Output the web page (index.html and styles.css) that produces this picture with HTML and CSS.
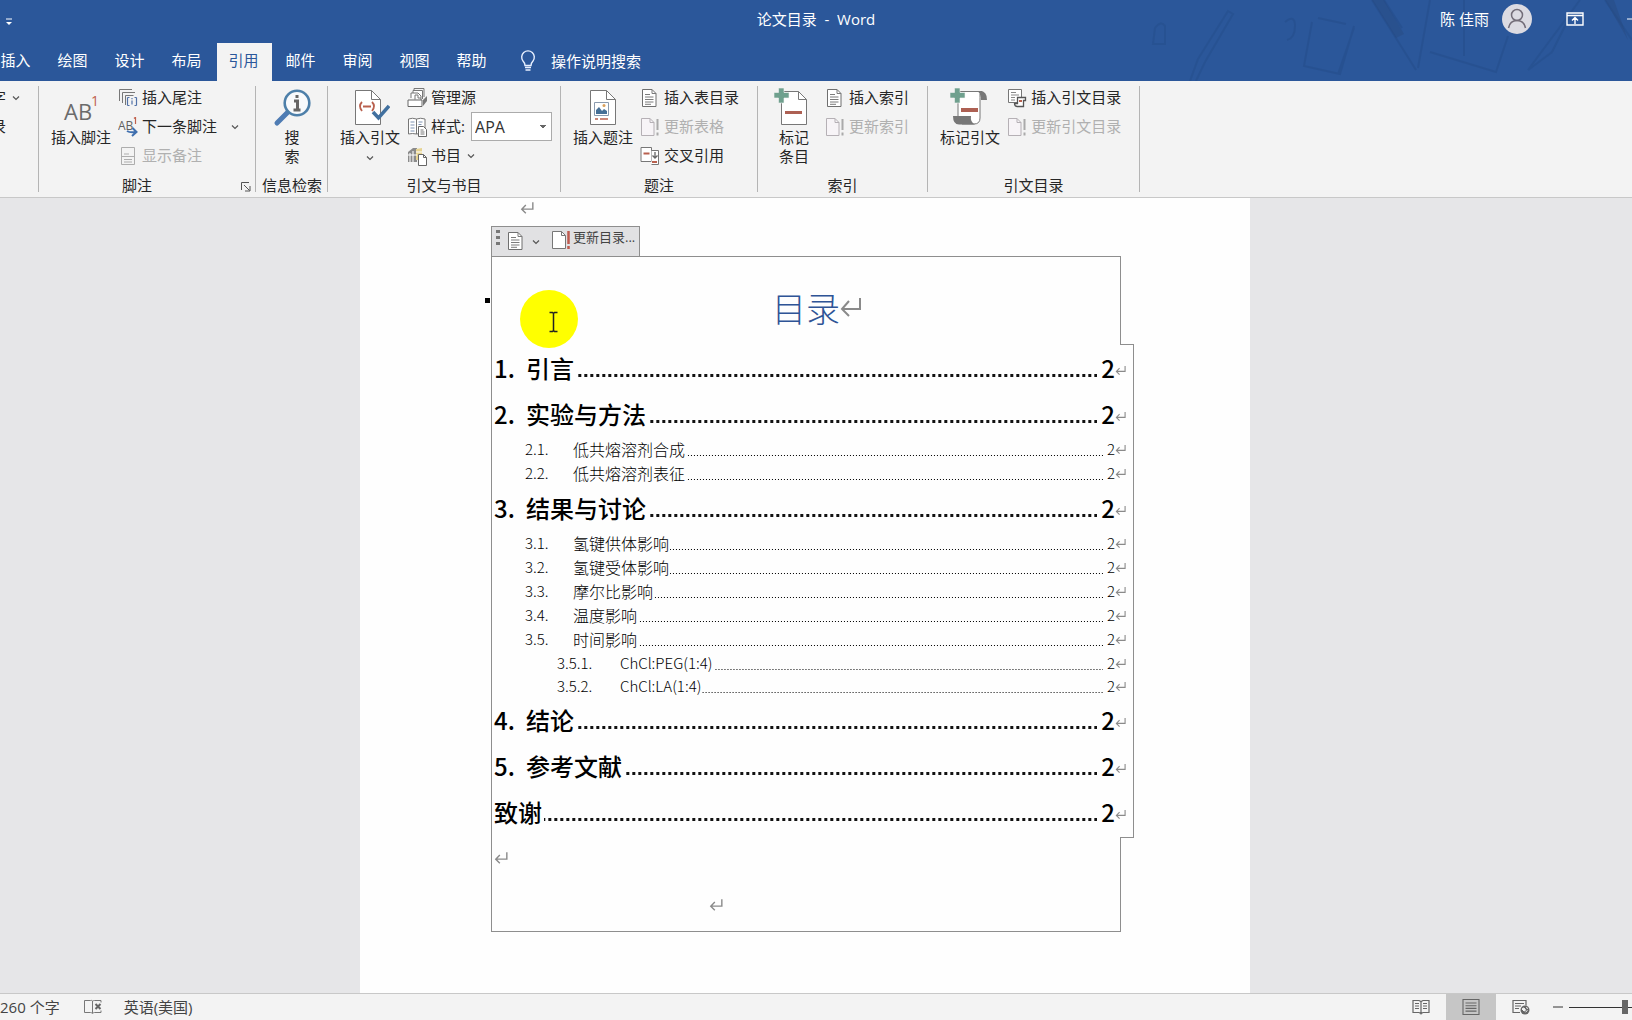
FILE: index.html
```html
<!DOCTYPE html>
<html lang="zh-CN">
<head>
<meta charset="utf-8">
<title>论文目录 - Word</title>
<link rel="stylesheet" href="styles.css">
</head>
<body>
<svg class="defs" aria-hidden="true">
  <symbol id="ret" viewBox="0 0 12 12"><path d="M11 1v6H1.500M5 3.500L1.500 7L5 10.500" fill="none" stroke="#8a8a8a" stroke-width="1.200"/></symbol>
  <symbol id="chev" viewBox="0 0 8 8"><path d="M1 2.500l3 3 3-3" fill="none" stroke="#555" stroke-width="1.200"/></symbol>
  <symbol id="list-doc" viewBox="0 0 20 20"><path d="M2.500 1.500h9.500l4 4v13h-13.500z" fill="#fff" stroke="#6f6f6f"/><path d="M12 1.500v4h4M5 6.500h5M5 9h8.500M5 11.500h8.500M5 14h8.500M5 16.300h6" fill="none" stroke="#7b7b7b"/></symbol>
  <symbol id="update-off" viewBox="0 0 20 20"><path d="M1.500 1.500h8.500l4 4v13h-12.500z" fill="#f7f4f7" stroke="#b5b0b5"/><path d="M10 1.500v4h4" fill="none" stroke="#b5b0b5"/><path d="M17.500 2v11M17.500 15.500v3" stroke="#aaa" stroke-width="2"/></symbol>
</svg>

<header class="top">
  <svg class="art" viewBox="0 0 532 81" aria-hidden="true">
    <g fill="none" stroke="#234a86" stroke-width="2" opacity=".4">
      <path d="M90 81l8-22 30-48 5 3-28 48-9 19M55 28q6-8 10-2v18h-12z"/>
      <path d="M185 22q10-8 10 4t-8 14M212 22l-8 44 36 8 14-48M218 18l28 6M254 28l-16 46"/>
      <path d="M272 0l44 70M284 0l18 28M330 0l-12 68M330 52l66 20 12-36M364 0v56M480 0l-52 70 24-18 18-36M505 0l27 40"/>
    </g>
    <path d="M272 0h12l20 34-8 4zM505 0h9l14 40z" fill="#27497d" opacity=".4"/>
  </svg>
  <div class="title-bar">
    <button class="qat" aria-label="自定义快速访问工具栏"><svg width="8" height="8" viewBox="0 0 8 8"><path d="M1 1h6" stroke="#fff"/><path d="M1 4h6L4 7z" fill="#fff"/></svg></button>
    <h1>论文目录&nbsp; -&nbsp; Word</h1>
    <div class="account">
      <span>陈 佳雨</span>
      <svg class="avatar" width="30" height="30" viewBox="0 0 30 30"><circle cx="15" cy="15" r="15" fill="#dcdbe2"/><circle cx="15" cy="11" r="5.500" fill="none" stroke="#736d78" stroke-width="1.500"/><path d="M6.500 24q1.500-7.500 8.500-7.500t8.500 7.500" fill="none" stroke="#736d78" stroke-width="1.500"/></svg>
      <button class="display" aria-label="功能区显示选项"><svg width="18" height="14" viewBox="0 0 18 14"><path d="M1 1h16v12H1zM1 3.500h16M9 12V6M6 8.500l3-3 3 3" fill="none" stroke="#fff" stroke-width="1.400"/></svg></button>
      <button class="min" aria-label="最小化"><svg width="5" height="2"><path d="M0 1h5" stroke="#fff"/></svg></button>
    </div>
  </div>
  <nav class="tabs">
    <button>插入</button><button>绘图</button><button>设计</button><button>布局</button><button class="active">引用</button><button>邮件</button><button>审阅</button><button>视图</button><button>帮助</button>
    <button class="tell"><svg width="16" height="22" viewBox="0 0 16 22"><path d="M5 15.500q0-2.500-2-4.500A6.300 6.300 0 1 1 13 11q-2 2-2 4.500zM5 17.500h6M5.500 20h5" fill="none" stroke="#e8f0ff" stroke-width="1.400"/></svg>操作说明搜索</button>
  </nav>
</header>

<section class="ribbon">
  <div class="group cut">
    <div class="body"><div class="stack">
      <button>添加文字<svg class="chev"><use href="#chev"/></svg></button>
      <button>更新目录</button>
    </div></div>
  </div>
  <i class="sep"></i>
  <div class="group notes">
    <div class="body">
      <button class="big"><svg viewBox="0 0 40 40"><text x="3" y="32" class="glyph-ab">AB</text><text x="30" y="18" class="glyph-one">1</text></svg>插入脚注</button>
      <div class="stack">
        <button><svg viewBox="0 0 20 20"><path d="M1.500 13V1.500H14M4.500 15V4.500H17M7.500 17V7.500h8" fill="none" stroke="#777"/><path d="M9.500 9.500v8M9.500 9.500h2M9.500 17.500h2M18.500 9.500v8M18.500 9.500h-2M18.500 17.500h-2M14 12.500v4M14 10v1.300" fill="none" stroke="#5272a8" stroke-width="1.200"/></svg>插入尾注</button>
        <button><svg viewBox="0 0 20 20"><text x="0" y="13" class="glyph-sm">AB</text><path d="M17.500 0v7M16 1.500l1.500-1.300" stroke="#c0604c" stroke-width="1.200" fill="none"/><path d="M9 14q3 2 9 1M14.500 11l4 4-4.500 4" fill="none" stroke="#3f6fae" stroke-width="2"/></svg>下一条脚注<svg class="chev far"><use href="#chev"/></svg></button>
        <button disabled><svg viewBox="0 0 20 20"><path d="M3.500 1.500h13v17h-13zM3.500 10.500h13M6 8h5M6 13.500h8M6 16h8" fill="none" stroke="#adadad"/></svg>显示备注</button>
      </div>
    </div>
    <div class="label">脚注<button class="launch" aria-label="脚注和尾注"><svg width="10" height="10" viewBox="0 0 10 10"><path d="M.5 8V.5H8M3 3l5.500 5.500M9 4v5H4" fill="none" stroke="#555"/></svg></button></div>
  </div>
  <i class="sep"></i>
  <div class="group lookup">
    <div class="body">
      <button class="big"><svg viewBox="0 0 40 40"><path d="M16 24L5 35" stroke="#4f7cb3" stroke-width="5" stroke-linecap="round"/><circle cx="25" cy="15" r="12.300" fill="#f8fafc" stroke="#4d7fa9" stroke-width="2.600"/><path d="M25 7v3M22 13h3.500v8M21.500 22h7" fill="none" stroke="#666" stroke-width="3"/></svg>搜<br>索</button>
    </div>
    <div class="label">信息检索</div>
  </div>
  <i class="sep"></i>
  <div class="group cite">
    <div class="body">
      <button class="big"><svg viewBox="0 0 40 40"><path d="M5.500 2.500h16l9 9v25h-25z" fill="#fff" stroke="#777"/><path d="M21.500 2.500v9h9" fill="none" stroke="#777"/><path d="M12 14q-4 4 0 9M22 14q4 4 0 9M13 18.500h8" fill="none" stroke="#b9604e" stroke-width="1.800"/><path d="M23 24l5.500 6L39 18" fill="none" stroke="#41709f" stroke-width="3.500"/></svg>插入引文<svg class="chev"><use href="#chev"/></svg></button>
      <div class="stack">
        <button><svg viewBox="0 0 20 20"><path d="M4 10V5h2V2.500h9.500V11M6 5h5l3 3v4" fill="#fff" stroke="#777"/><path d="M7 2.500V.5h10V9M8 11.500V7h3v3h3" fill="none" stroke="#777"/><path d="M1 12h14v6.500H1z" fill="#fff" stroke="#666"/><path d="M16 12l4-4v5l-4 5z" fill="#777"/></svg>管理源</button>
        <div class="field"><svg viewBox="0 0 20 20"><path d="M1.500 2q4-1.500 8 0 4-1.500 8.500 0v15q-4-1-8.500 0-4-1-8 0zM9.500 2v15" fill="#fff" stroke="#777"/><path d="M3.500 5h4M3.500 8h4M3.500 11h4M3.500 14h4M11.500 5h4M11.500 7.500h3" stroke="#7e93b3"/><path d="M11.500 9.500h5l3 3v7h-8z" fill="#fff" stroke="#666"/><path d="M13.500 13h3M13.500 15h4M13.500 17h4" stroke="#777"/></svg><label for="style">样式:</label><select id="style"><option>APA</option></select></div>
        <button><svg viewBox="0 0 20 20"><path d="M1 6l5-4h4v14H1z" fill="#8b8b8b"/><path d="M3 7v9M6 5v11" stroke="#ddd" stroke-width="1.500"/><path d="M9 3l6-1v12H9z" fill="#e6d391"/><path d="M1 9h9M9 6h6" stroke="#fff"/><path d="M11.500 8.500h5l3 3v8h-8z" fill="#fff" stroke="#666"/><path d="M16.500 8.500v3h3" fill="none" stroke="#666"/></svg>书目<svg class="chev"><use href="#chev"/></svg></button>
      </div>
    </div>
    <div class="label">引文与书目</div>
  </div>
  <i class="sep"></i>
  <div class="group">
    <div class="body">
      <button class="big"><svg viewBox="0 0 40 40"><path d="M7.500 2.500h16l9 9v25h-25z" fill="#fff" stroke="#777"/><path d="M23.500 2.500v9h9" fill="none" stroke="#777"/><path d="M11.500 14.500h14v13h-14z" fill="#fff" stroke="#8a9aae"/><path d="M13 26v-4l3-3 3 4 2-2 3 2v3z" fill="#456f96"/><circle cx="21" cy="17.500" r="1.500" fill="#d9a05c"/><path d="M12 31h3M17 31h8" stroke="#b9604e" stroke-width="1.500"/></svg>插入题注</button>
      <div class="stack">
        <button><svg><use href="#list-doc"/></svg>插入表目录</button>
        <button disabled><svg><use href="#update-off"/></svg>更新表格</button>
        <button><svg viewBox="0 0 20 20"><path d="M1 1.500h10.500v14H1z" fill="#fff" stroke="#777"/><path d="M3.500 7.500h6" stroke="#b9604e" stroke-width="2"/><path d="M11.500 4.500h7v14h-7" fill="#fff" stroke="#777"/><path d="M15 6v6M12.500 9.500L15 12l2.500-2.500" fill="none" stroke="#666" stroke-width="1.300"/><path d="M12 16h5" stroke="#b9604e" stroke-width="2"/></svg>交叉引用</button>
      </div>
    </div>
    <div class="label">题注</div>
  </div>
  <i class="sep"></i>
  <div class="group">
    <div class="body">
      <button class="big narrow"><svg viewBox="0 0 40 40"><path d="M7.500 3.500h17l8 8v25h-25z" fill="#fff" stroke="#777"/><path d="M24.500 3.500v8h8" fill="none" stroke="#777"/><path d="M0 4.500h4.500V0H10v4.500h5V10h-5v5H4.500v-5H0z" fill="#6fa08e" stroke="#f3f3f3" stroke-width=".6"/><path d="M11 24.500h17" stroke="#ad6053" stroke-width="3"/></svg>标记<br>条目</button>
      <div class="stack">
        <button><svg><use href="#list-doc"/></svg>插入索引</button>
        <button disabled><svg><use href="#update-off"/></svg>更新索引</button>
      </div>
    </div>
    <div class="label">索引</div>
  </div>
  <i class="sep"></i>
  <div class="group">
    <div class="body">
      <button class="big"><svg viewBox="0 0 40 40"><path d="M8 28V3.500h24q-3 2-2 6V30q0 6-6 6H12z" fill="#fff" stroke="#777"/><path d="M30 3q7 0 7 9h-6q0-6-3-8.500z" fill="#777"/><path d="M3 28h18q-1 6 4 8.500H9q-6 0-6-8.500z" fill="#777"/><path d="M0 4.500h4.500V0H10v4.500h5V10h-5v5H4.500v-5H0z" fill="#6fa08e" stroke="#f3f3f3" stroke-width=".6"/><path d="M11 22h17" stroke="#ad6053" stroke-width="4"/></svg>标记引文</button>
      <div class="stack">
        <button><svg viewBox="0 0 20 20"><path d="M1.500 1.500h13v13H1.500z" fill="#fff" stroke="#777"/><path d="M4 4.500h5M4 7h8M4 9.500h4M4 12h4" stroke="#888"/><path d="M10.500 9.500h8v3h-2v6h-6q-3 0-3-3h3z" fill="#fff" stroke="#555" stroke-width="1.300"/><path d="M12 13h3" stroke="#b9604e" stroke-width="2"/></svg>插入引文目录</button>
        <button disabled><svg><use href="#update-off"/></svg>更新引文目录</button>
      </div>
    </div>
    <div class="label">引文目录</div>
  </div>
  <i class="sep"></i>
</section>

<main class="desk">
  <article class="page">
    <p class="lead"><svg class="ret"><use href="#ret"/></svg></p>
    <div class="toc-bar">
      <svg width="4" height="16" viewBox="0 0 4 16"><path d="M0 0h4v3H0zM0 6h4v3H0zM0 12h4v3H0z" fill="#777"/></svg>
      <button class="pick" aria-label="目录"><svg width="20" height="20"><use href="#list-doc"/></svg><svg class="chev"><use href="#chev"/></svg></button>
      <button class="upd"><svg width="20" height="20" viewBox="0 0 20 20"><path d="M1.500 1.500h9l4 4v13h-13z" fill="#fff" stroke="#777"/><path d="M10.500 1.500v4h4" fill="none" stroke="#777"/><path d="M17.500 1v13M17.500 16v3" stroke="#bf5b50" stroke-width="2.500"/></svg>更新目录...</button>
    </div>
    <div class="toc">
      <div class="toc-head"><i class="mark"></i><h2>目录<svg width="22" height="24" viewBox="0 0 22 24"><path d="M20 3v11H2M9 6l-7 8 7 7" fill="none" stroke="#8a8a8a" stroke-width="2"/></svg></h2></div>
      <nav class="toc-list">
        <a href="#s1" class="l1"><span class="num">1.</span><span>引言</span><i></i><b>2</b><svg><use href="#ret"/></svg></a>
        <a href="#s2" class="l1"><span class="num">2.</span><span>实验与方法</span><i></i><b>2</b><svg><use href="#ret"/></svg></a>
        <a href="#s21" class="l2"><span class="num">2.1.</span><span>低共熔溶剂合成</span><i></i><b>2</b><svg><use href="#ret"/></svg></a>
        <a href="#s22" class="l2"><span class="num">2.2.</span><span>低共熔溶剂表征</span><i></i><b>2</b><svg><use href="#ret"/></svg></a>
        <a href="#s3" class="l1"><span class="num">3.</span><span>结果与讨论</span><i></i><b>2</b><svg><use href="#ret"/></svg></a>
        <a href="#s31" class="l2"><span class="num">3.1.</span><span>氢键供体影响</span><i></i><b>2</b><svg><use href="#ret"/></svg></a>
        <a href="#s32" class="l2"><span class="num">3.2.</span><span>氢键受体影响</span><i></i><b>2</b><svg><use href="#ret"/></svg></a>
        <a href="#s33" class="l2"><span class="num">3.3.</span><span>摩尔比影响</span><i></i><b>2</b><svg><use href="#ret"/></svg></a>
        <a href="#s34" class="l2"><span class="num">3.4.</span><span>温度影响</span><i></i><b>2</b><svg><use href="#ret"/></svg></a>
        <a href="#s35" class="l2"><span class="num">3.5.</span><span>时间影响</span><i></i><b>2</b><svg><use href="#ret"/></svg></a>
        <a href="#s351" class="l3"><span class="num">3.5.1.</span><span>ChCl:PEG(1:4)</span><i></i><b>2</b><svg><use href="#ret"/></svg></a>
        <a href="#s352" class="l3"><span class="num">3.5.2.</span><span>ChCl:LA(1:4)</span><i></i><b>2</b><svg><use href="#ret"/></svg></a>
        <a href="#s4" class="l1"><span class="num">4.</span><span>结论</span><i></i><b>2</b><svg><use href="#ret"/></svg></a>
        <a href="#s5" class="l1"><span class="num">5.</span><span>参考文献</span><i></i><b>2</b><svg><use href="#ret"/></svg></a>
        <a href="#s6" class="l1"><span>致谢</span><i></i><b>2</b><svg><use href="#ret"/></svg></a>
      </nav>
      <div class="toc-foot">
        <p><svg class="ret"><use href="#ret"/></svg></p>
        <p class="indent"><svg class="ret"><use href="#ret"/></svg></p>
      </div>
    </div>
    <svg class="pointer" width="60" height="60" viewBox="0 0 60 60"><circle cx="30" cy="30" r="29" fill="#ff0"/><path d="M30.500 23.500h3l1 1 1-1h3M34.500 24v18M30.500 42.500h3l1-1 1 1h3" fill="none" stroke="#222" stroke-width="1.500"/></svg>
  </article>
</main>

<footer class="status">
  <span class="words">260 个字</span>
  <button class="proof" aria-label="校对"><svg width="18" height="16" viewBox="0 0 18 16"><path d="M8.500 2v12M8.500 2q-1-1-2-.5h-6v12h6q1 0 2 1 1-1 2-1h6.500v-2M8.500 2q1-.5 2-.5h6.500v2" fill="none" stroke="#777"/><path d="M11.500 5l5 5M16.500 5l-5 5" stroke="#666" stroke-width="2"/></svg></button>
  <span class="lang">英语(美国)</span>
  <div class="views">
    <button aria-label="阅读视图"><svg width="18" height="16" viewBox="0 0 18 16"><path d="M9 2v13.500M1 1.500h6l2 1 2-1h6v12h-6l-2 1-2-1H1zM3 4.500h4M3 7h4M3 9.500h4M11 4.500h4M11 7h4M11 9.500h4" fill="none" stroke="#666" stroke-width="1.200"/></svg></button>
    <button class="on" aria-label="页面视图"><svg width="18" height="16" viewBox="0 0 18 16"><path d="M1 .5h16v15H1zM3.500 4h11M3.500 6.700h11M3.500 9.400h11M3.500 12.100h11" fill="none" stroke="#666" stroke-width="1.100"/></svg></button>
    <button aria-label="Web 版式视图"><svg width="18" height="16" viewBox="0 0 18 16"><path d="M8 13.500H1v-12h13v5M3 4.500h9M3 7h6M3 9.500h4" fill="none" stroke="#666" stroke-width="1.200"/><circle cx="13" cy="11" r="4.500" fill="#666"/><path d="M10 10q2-2 3 0t-1 2zM14 8.500l2 1M13.500 13l2-1.500" fill="#f3f3f3" stroke="#f3f3f3"/></svg></button>
    <button class="out" aria-label="缩小"><svg width="10" height="2"><path d="M0 1h10" stroke="#333"/></svg></button>
    <div class="zoom"><input type="range" min="0" max="100" value="50" aria-label="显示比例"></div>
  </div>
</footer>
</body>
</html>
```
FILE: styles.css
```css
* { box-sizing: border-box; }
html, body { height: 100%; }
body {
  margin: 0;
  display: flex;
  flex-direction: column;
  overflow: hidden;
  font: 15px/19px "Open Sans", "Noto Sans CJK SC", sans-serif;
  color: #262626;
  background: #e6e6e8;
}
h1, h2, p { margin: 0; font-weight: 400; }
button {
  padding: 0;
  border: 0;
  background: none;
  font: inherit;
  color: inherit;
  white-space: nowrap;
}
svg { display: block; flex: none; }
.defs { position: absolute; width: 0; height: 0; }
.chev { width: 8px; height: 8px; }

/* Title bar and tabs */
.top { position: relative; background: #2b579a; color: #fff; }
.art { position: absolute; right: 0; top: 0; width: 532px; height: 81px; }
.title-bar {
  position: relative;
  display: grid;
  grid-template-columns: 1fr auto 1fr;
  align-items: center;
  height: 38px;
}
.title-bar h1 { font-size: 15px; line-height: 19px; }
.qat { justify-self: start; margin-left: 5px; padding-top: 6px; }
.account { display: flex; justify-content: flex-end; align-items: center; }
.avatar { margin-left: 13px; }
.display { margin-left: 34px; }
.min { margin-left: 43px; }
.tabs {
  position: relative;
  display: flex;
  gap: 2px;
  margin-left: -11px;
  padding-top: 5px;
}
.tabs button { width: 55px; height: 38px; padding: 0 2px 4px 0; }
.tabs .active { background: #f3f3f3; color: #2b579a; }
.tabs .tell { display: flex; align-items: center; gap: 15px; width: auto; margin-left: 18px; padding-bottom: 2px; }

/* Ribbon */
.ribbon {
  display: flex;
  padding: 2px 0;
  background: #f3f3f3;
  border-bottom: 1px solid #c8c8c8;
}
.sep { width: 1px; margin: 3px 0; background: #b4b4b4; }
.group { display: flex; flex-direction: column; }
.body { display: flex; gap: 7px; height: 88px; padding: 0 18px 0 12px; }
.label { display: flex; justify-content: center; margin-top: 4px; line-height: 20px; }
.big {
  display: flex;
  flex-direction: column;
  align-items: center;
  padding-top: 5px;
  line-height: 19px;
}
.big svg { width: 40px; height: 40px; }
.big .chev { width: 8px; height: 8px; margin: 7px 0 0; }
.narrow { width: 48px; }
.stack button, .field {
  display: flex;
  align-items: center;
  gap: 4px;
  height: 29px;
}
.stack svg { width: 20px; height: 20px; }
.stack .chev { width: 8px; height: 8px; margin-left: 2px; }
.stack .far { margin-left: 10px; }
.stack button:disabled { color: #b0b0b0; }
.glyph-ab { font: 22px "Open Sans", sans-serif; fill: #6b6b6b; }
.glyph-one { font: 14px "Open Sans", sans-serif; fill: #c0604c; }
.glyph-sm { font: 12px "Open Sans", sans-serif; fill: #5f5f5f; }
.cut { width: 38px; align-items: flex-end; }
.notes .body { padding-right: 16px; }
.cut .body { padding-right: 18px; }
.notes .label { position: relative; padding-right: 20px; }
.launch { position: absolute; right: 4px; top: 7px; }
.lookup { padding: 0 5px 0 6px; }
.lookup .body { justify-content: center; padding: 0; }
.cite .body { padding-right: 8px; }
.field label { width: 36px; }
.field select {
  width: 81px;
  height: 29px;
  padding: 0 3px;
  border: 1px solid #ababab;
  border-radius: 0;
  appearance: none;
  background: conic-gradient(from -45deg at 50% 100%, #666 90deg, transparent 0) no-repeat right 5px center / 6px 3px, #fff;
  font: 16px "Open Sans", sans-serif;
  color: #333;
}

/* Document */
.desk { flex: 1; min-height: 0; display: flex; justify-content: center; padding-right: 22px; overflow: hidden; }
.page { position: relative; width: 890px; padding-left: 131px; background: #fefefe; }
.ret { width: 14px; height: 14px; }
.lead { height: 28px; padding: 3px 0 0 29px; }
.toc-bar {
  display: flex;
  width: 149px;
  height: 31px;
  padding: 3px 0 0 4px;
  border: 1px solid #8e8e8e;
  background: #e1e1e3;
  margin-bottom: -1px;
}
.toc-bar button { display: flex; }
.pick { margin-left: 6px; padding-top: 1px; gap: 6px; }
.pick .chev { margin-top: 7px; }
.upd { margin-left: 11px; gap: 2px; font-size: 13px; line-height: 15px; color: #444; }
.toc-head, .toc-foot {
  position: relative;
  z-index: 1;
  width: 630px;
  border: 1px solid #8e8e8e;
  background: #fefefe;
}
.toc-head { height: 89px; border-bottom: 0; }
.toc-head h2 {
  display: flex;
  justify-content: center;
  padding: 28px 0 0 22px;
  font-size: 34px;
  line-height: 48px;
  font-weight: 300;
  color: #2f5496;
}
.toc-head h2 svg { margin-top: 10px; }
.mark { position: absolute; left: -7px; top: 41px; width: 5px; height: 5px; background: #000; }
.toc-list {
  width: 643px;
  height: 494px;
  margin: -1px 0;
  padding: 0 7px 0 2px;
  border: 1px solid #8e8e8e;
  font-family: "Noto Sans CJK SC", sans-serif;
}
.toc-list a { display: flex; color: #000; text-decoration: none; font-size: 16px; }
.toc-list b { font-weight: inherit; }
.toc-list i { flex: 1; }
.toc-list svg { width: 11px; height: 11px; }
.l1 { height: 46px; line-height: 46px; }
.toc-list .l1 { font-size: 24px; font-weight: 500; }
.l1 .num { width: 32px; }
.l1 i {
  margin: 29px 4px 0 2px;
  height: 3px;
  background: linear-gradient(90deg, transparent 3px, #111 3px) right top / 6px 3px;
}
.l1 svg { margin-top: 20px; }
.l2 { height: 24px; line-height: 24px; padding-left: 31px; }
.l2 .num { width: 48px; }
.l3 { height: 23px; line-height: 23px; padding-left: 63px; }
.l3 .num { width: 63px; }
.toc-list .l2, .toc-list .l3 { font-weight: 300; }
.toc-list .l3, .l2 .num, .l2 b { font-size: 15px; }
.l2 i, .l3 i {
  margin: 18px 4px 0 1px;
  height: 1px;
  background: linear-gradient(90deg, transparent 2px, #000 2px) right top / 3px 1px;
}
.l2 svg, .l3 svg { margin-top: 7px; }
.toc-foot { height: 95px; padding: 14px 0 0 2px; border-top: 0; }
.toc-foot p { height: 47px; }
.toc-foot .indent { padding-left: 215px; }
.pointer { position: absolute; z-index: 2; left: 159px; top: 91px; }

/* Status bar */
.status {
  display: flex;
  align-items: center;
  height: 27px;
  background: #f3f3f3;
  border-top: 1px solid #c8c8c8;
  color: #444;
}
.proof { margin-left: 24px; }
.lang { margin-left: 22px; }
.views { display: flex; align-items: center; align-self: stretch; margin-left: auto; }
.views button { display: grid; place-items: center; width: 50px; height: 100%; }
.views .on { background: #c6c6c6; }
.views .out { width: 10px; margin: 0 6px 0 7px; }
.zoom { width: 63px; overflow: hidden; }
.zoom input {
  display: block;
  width: 112px;
  height: 14px;
  margin: 0;
  appearance: none;
  background: linear-gradient(#333, #333) center / 100% 1px no-repeat;
}
.zoom input::-webkit-slider-thumb { appearance: none; width: 6px; height: 14px; background: #666; }
```
